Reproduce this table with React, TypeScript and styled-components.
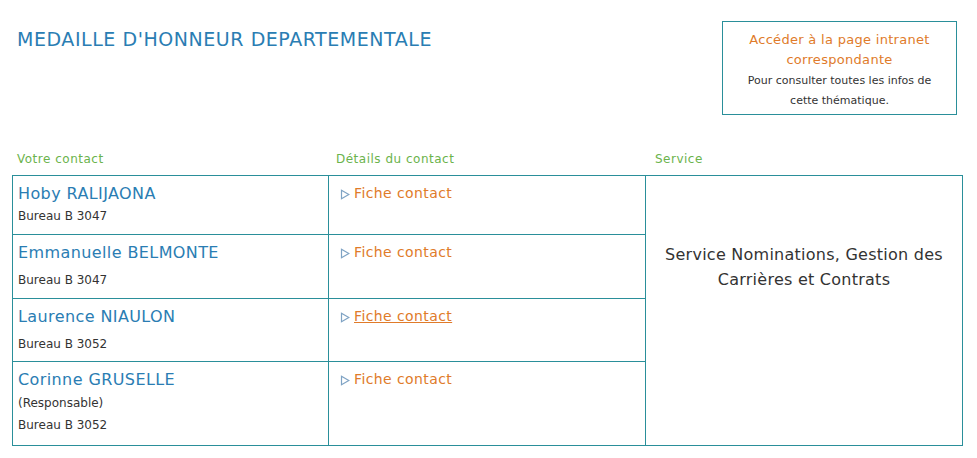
import React from "react";
import styled, { createGlobalStyle } from "styled-components";

const Global = createGlobalStyle`
  html, body { margin: 0; padding: 0; background: #fff; }
  body { font-family: "DejaVu Sans", "Liberation Sans", sans-serif; }
`;

const Page = styled.div`
  width: 977px;
  height: 458px;
  box-sizing: border-box;
  padding: 21px 20px 0 12px;
`;

const Top = styled.div`
  display: flex;
  justify-content: space-between;
  align-items: flex-start;
  height: 131px;
`;

const Title = styled.h1`
  margin: 7px 0 0 5px;
  font-size: 19px;
  font-weight: normal;
  color: #2a7db3;
  letter-spacing: 0.55px;
`;

const InfoBox = styled.div`
  width: 235px;
  height: 94px;
  box-sizing: border-box;
  border: 1px solid #2a8f9a;
  text-align: center;
  padding-top: 8px;
`;

const InfoLink = styled.div`
  color: #e07b2a;
  font-size: 13px;
  line-height: 20px;
  letter-spacing: 0.3px;
`;

const InfoText = styled.div`
  color: #333;
  font-size: 11px;
  line-height: 20px;
  margin-top: 1px;
`;

const Labels = styled.div`
  display: grid;
  grid-template-columns: 316px 317px 317px;
  height: 23px;
`;

const Label = styled.div<{ $pad: number }>`
  color: #6bb34c;
  font-size: 12px;
  letter-spacing: 0.5px;
  padding-left: ${(p) => p.$pad}px;
`;

const Table = styled.table`
  border-collapse: collapse;
  table-layout: fixed;
  width: 951px;
`;

const Cell = styled.td<{ $h?: number }>`
  border: 1px solid #2a8f9a;
  vertical-align: top;
  padding: 0;
  height: ${(p) => (p.$h ? `${p.$h}px` : "auto")};
  box-sizing: border-box;
`;

const ContactBox = styled.div<{ $gap: number }>`
  padding: 8px 0 0 5px;
  display: flex;
  flex-direction: column;
  gap: ${(p) => p.$gap}px;
`;

const Name = styled.div`
  color: #2a7db3;
  font-size: 16px;
  line-height: 20px;
  letter-spacing: 0.4px;
`;

const Sub = styled.div`
  color: #333;
  font-size: 12px;
  line-height: 18px;
`;

const SubGroup = styled.div`
  display: flex;
  flex-direction: column;
  gap: 4px;
`;

const FicheBox = styled.div`
  padding: 7px 0 0 11px;
  display: flex;
  align-items: center;
  gap: 4px;
`;

const Arrow = styled.svg`
  width: 10px;
  height: 11px;
  flex: none;
  margin-top: 3px;
`;

const Fiche = styled.a<{ $under?: boolean }>`
  color: #e07b2a;
  font-size: 14px;
  line-height: 20px;
  letter-spacing: 0.4px;
  text-decoration: ${(p) => (p.$under ? "underline" : "none")};
  cursor: pointer;
`;

const ServiceCell = styled(Cell)`
  text-align: center;
  vertical-align: top;
`;

const ServiceText = styled.div`
  padding-top: 66px;
  color: #333;
  font-size: 16px;
  line-height: 25px;
  letter-spacing: 0.25px;
`;

type Contact = {
  name: string;
  lines: string[];
  h: number;
  gap: number;
  under?: boolean;
};

const contacts: Contact[] = [
  { name: "Hoby RALIJAONA", lines: ["Bureau B 3047"], h: 59, gap: 3 },
  { name: "Emmanuelle BELMONTE", lines: ["Bureau B 3047"], h: 64, gap: 8 },
  { name: "Laurence NIAULON", lines: ["Bureau B 3052"], h: 63, gap: 8, under: true },
  { name: "Corinne GRUSELLE", lines: ["(Responsable)", "Bureau B 3052"], h: 84, gap: 4 },
];

const ArrowIcon = () => (
  <Arrow viewBox="0 0 10 11">
    <path d="M1.5 1.2 L8.8 5.5 L1.5 9.8 Z" fill="none" stroke="#7fa3c4" strokeWidth="1.2" />
  </Arrow>
);

export default function App() {
  return (
    <>
      <Global />
      <Page>
        <Top>
          <Title>MEDAILLE D'HONNEUR DEPARTEMENTALE</Title>
          <InfoBox>
            <InfoLink>
              Accéder à la page intranet
              <br />
              correspondante
            </InfoLink>
            <InfoText>
              Pour consulter toutes les infos de
              <br />
              cette thématique.
            </InfoText>
          </InfoBox>
        </Top>
        <Labels>
          <Label $pad={5}>Votre contact</Label>
          <Label $pad={8}>Détails du contact</Label>
          <Label $pad={10}>Service</Label>
        </Labels>
        <Table>
          <colgroup>
            <col style={{ width: 316 }} />
            <col style={{ width: 317 }} />
            <col style={{ width: 317 }} />
          </colgroup>
          <tbody>
            {contacts.map((c, i) => (
              <tr key={c.name}>
                <Cell $h={c.h}>
                  <ContactBox $gap={c.gap}>
                    <Name>{c.name}</Name>
                    <SubGroup>
                      {c.lines.map((l) => (
                        <Sub key={l}>{l}</Sub>
                      ))}
                    </SubGroup>
                  </ContactBox>
                </Cell>
                <Cell $h={c.h}>
                  <FicheBox>
                    <ArrowIcon />
                    <Fiche $under={c.under}>Fiche contact</Fiche>
                  </FicheBox>
                </Cell>
                {i === 0 && (
                  <ServiceCell rowSpan={4}>
                    <ServiceText>
                      Service Nominations, Gestion des
                      <br />
                      Carrières et Contrats
                    </ServiceText>
                  </ServiceCell>
                )}
              </tr>
            ))}
          </tbody>
        </Table>
      </Page>
    </>
  );
}
